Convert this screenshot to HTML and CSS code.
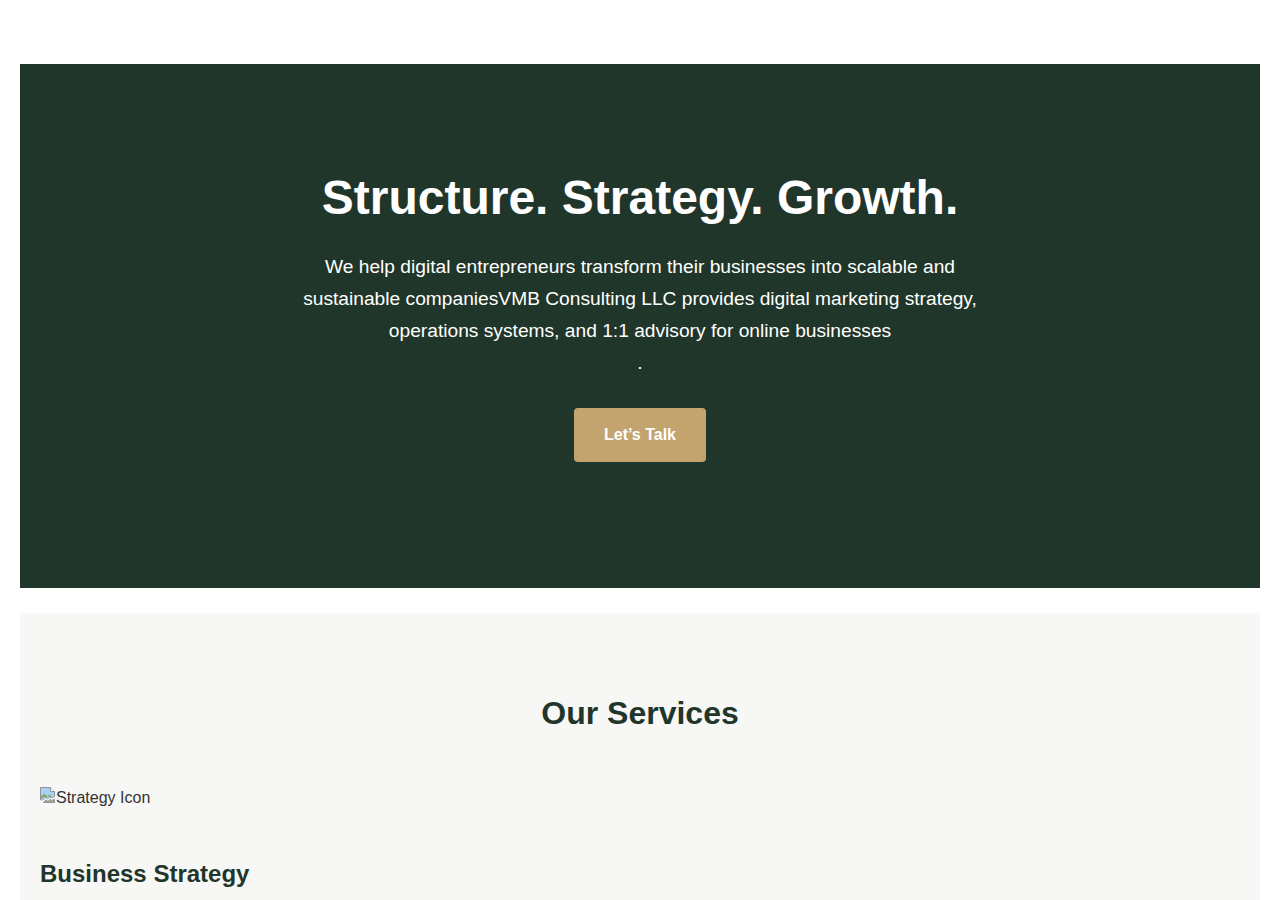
FILE: index.html
```html
<!DOCTYPE html>
<html lang="en">
<head>
<meta charset="utf-8">
<title>VMB Consulting LLC</title>
<link rel="stylesheet" href="styles.css">
</head>
<body>
<header class="site-header"></header>
<main class="page">
  <section class="hero">
    <h1 class="hero-title">Structure. Strategy. Growth.</h1>
    <p class="hero-text">We help digital entrepreneurs transform their businesses into scalable and sustainable companiesVMB Consulting LLC provides digital marketing strategy, operations systems, and 1:1 advisory for online businesses<br>.</p>
    <a class="btn" href="#contact">Let’s Talk</a>
  </section>
  <section class="services">
    <h2 class="section-title">Our Services</h2>
    <div class="service">
      <div class="service-icon">
        <svg class="broken-img" width="16" height="16" viewBox="0 0 16 16" aria-hidden="true">
          <!-- torn page with a small landscape: missing picture placeholder -->
          <path d="M0.5 0.5h10l4 4v5l-2.5 1.5-2-1.2-2.2 2-2-1.2-2.3 2.2-3 0z" fill="#f2f5f8" stroke="#8d939a" stroke-width="1"/>
          <path d="M1 1h9.3v3.8h3.7v4.4l-2 1.2-2-1.2-2.2 2-2-1.2-2.3 2.2H1z" fill="#a8d0f0"/>
          <path d="M1 9.5l3-2.8 3 2.4 2-1.4 3 1.2-2 1.3-2-1.2-2.2 2-2-1.2-2.3 2.2H1z" fill="#82a86c"/>
          <path d="M10.5 0.5v4h4" fill="#ffffff" stroke="#8d939a" stroke-width="1"/>
          <path d="M3.5 15.5l2.5-2.3 2 1.2 2.2-2 2 1.2 2.3-1.4v3.3z" fill="#b9a27c" stroke="#8d939a" stroke-width="1"/>
        </svg><span class="alt-text">Strategy Icon</span>
      </div>
      <h3 class="service-title">Business Strategy</h3>
    </div>
  </section>
</main>
</body>
</html>
```

FILE: styles.css
```css
* {
  box-sizing: border-box;
}

html, body {
  margin: 0;
  padding: 0;
  background: #ffffff;
}

body {
  font-family: "Liberation Sans", Arial, sans-serif;
  color: #333333;
}

.site-header {
  height: 64px;
}

.page {
  padding: 0 20px;
}

.hero {
  background: #21362a;
  color: #ffffff;
  text-align: center;
  padding: 105px 20px 126px;
  display: flex;
  flex-direction: column;
  align-items: center;
}

.hero-title {
  margin: 0 0 24px;
  font-size: 48px;
  line-height: 1.2;
  font-weight: 700;
}

.hero-text {
  margin: 0 0 29px;
  max-width: 700px;
  font-size: 19.2px;
  line-height: 32px;
}

.btn {
  display: inline-block;
  background: #c4a46e;
  color: #ffffff;
  font-weight: 700;
  font-size: 16px;
  line-height: 18px;
  padding: 18px 30px;
  border-radius: 4px;
  text-decoration: none;
}

.services {
  margin-top: 25px;
  background: #f7f7f5;
  padding: 81px 20px 20px;
}

.section-title {
  margin: 0 0 54px;
  text-align: center;
  font-size: 32px;
  line-height: 1.2;
  color: #21362a;
}

.service-icon {
  display: flex;
  align-items: flex-start;
  height: 24px;
  font-size: 16px;
  line-height: 24px;
  color: #333333;
}

.broken-img {
  display: block;
  margin-top: 1px;
}

.service-title {
  margin: 50px 0 0;
  font-size: 24px;
  line-height: 1.2;
  color: #21362a;
}
```
